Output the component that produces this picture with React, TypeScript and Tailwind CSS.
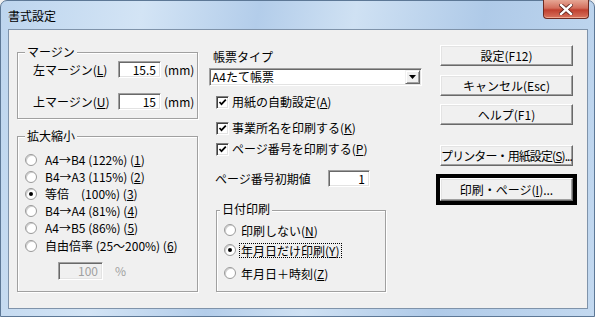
import React from "react";

const F = "font-['Noto_Sans_CJK_JP','Noto_Sans',sans-serif]";

const U = ({ c }: { c: string }) => (
  <span className="underline underline-offset-[1px] decoration-[1px]">{c}</span>
);

function Radio({ checked }: { checked?: boolean }) {
  return (
    <span className="w-[12px] h-[12px] rounded-full border border-[#9a9a9a] bg-white flex items-center justify-center shrink-0 shadow-[inset_1px_1px_0_#cfcfcf]">
      {checked && <span className="w-[4px] h-[4px] rounded-full bg-black" />}
    </span>
  );
}

function Check() {
  return (
    <span className="w-[13px] h-[13px] border border-t-[#808080] border-l-[#808080] border-b-[#ffffff] border-r-[#ffffff] bg-white shadow-[inset_1px_1px_0_#404040,inset_-1px_-1px_0_#e3e3e3] flex items-center justify-center shrink-0">
      <svg width="9" height="9" viewBox="0 0 9 9">
        <path d="M1.5 4 L3.5 6.2 L7.8 1.6" stroke="#000" strokeWidth="1.7" fill="none" />
      </svg>
    </span>
  );
}

function Edit({ v, w, h, disabled }: { v: string; w: string; h: string; disabled?: boolean }) {
  return (
    <span
      className={`${w} ${h} border border-t-[#a0a0a0] border-l-[#a0a0a0] border-b-[#ffffff] border-r-[#ffffff] shadow-[inset_1px_1px_0_#696969,inset_-1px_-1px_0_#e3e3e3] flex items-center justify-end pr-[4px] shrink-0 ${
        disabled ? "bg-[#f0f0f0] text-[#a0a0a0]" : "bg-white text-black"
      }`}
    >
      {v}
    </span>
  );
}

function Btn({ children, h = "h-[21px]", extra = "" }: { children: React.ReactNode; h?: string; extra?: string }) {
  return (
    <div
      className={`w-[133px] ${h} bg-[#f0f0f0] border border-t-[#ffffff] border-l-[#ffffff] border-b-[#696969] border-r-[#696969] shadow-[inset_-1px_-1px_0_#a0a0a0,inset_1px_1px_0_#e3e3e3] flex items-center justify-center whitespace-nowrap overflow-hidden text-[12px] leading-[12px] ${extra}`}
    >
      {children}
    </div>
  );
}

export default function App() {
  return (
    <div className={`${F} w-[595px] h-[317px] relative overflow-hidden text-black text-[12px] leading-[12px] bg-[#f0f0f0]`}>
      <div className="w-[595px] h-[317px] rounded-t-[7px] border border-[#5d7896] bg-[linear-gradient(100deg,#bdd5ee_0%,#d3e4f5_22%,#b3cdea_40%,#cfe1f3_55%,#afcae8_75%,#c3d9f0_100%)] flex flex-col">
        {/* title bar */}
        <div className="h-[28px] flex items-start pl-[7px] pt-[8px] shrink-0">
          <span className="text-[12px] leading-[14px] text-black">書式設定</span>
        </div>
        <div className="absolute top-0 right-[6px] w-[46px] h-[19px] rounded-b-[4px] border border-t-0 border-[#6e2b22] bg-[linear-gradient(180deg,#e6a795_0%,#d36e5c_45%,#c0402f_55%,#d8735e_100%)] flex items-center justify-center shadow-[inset_0_-1px_0_#f0a890]">
          <svg width="14" height="11" viewBox="0 0 14 11">
            <path d="M2 1 L12 10 M12 1 L2 10" stroke="#5a2018" strokeWidth="4" strokeLinecap="square" />
            <path d="M2 1 L12 10 M12 1 L2 10" stroke="#ffffff" strokeWidth="2.4" strokeLinecap="square" />
          </svg>
        </div>

        {/* client area */}
        <div className="ml-[7px] w-[580px] h-[280px] border border-[#7f93aa] bg-[#f0f0f0] flex items-start shrink-0">
          {/* left column */}
          <div className="ml-[8px] w-[181px] pt-[22px] flex flex-col shrink-0">
            <div className="relative h-[67px] border border-[#a0a0a0] shadow-[inset_1px_1px_0_#fff,1px_1px_0_#fff] pt-[8px] pl-[15px] flex flex-col">
              <span className="absolute -top-[7px] left-[7px] px-[2px] bg-[#f0f0f0] leading-[12px]">マージン</span>
              <div className="h-[17px] flex items-center">
                <span className="w-[85px]">左マージン(<U c="L" />)</span>
                <Edit v="15.5" w="w-[43px]" h="h-[17px]" />
                <span className="ml-[3px]">(mm)</span>
              </div>
              <div className="h-[17px] mt-[15px] flex items-center">
                <span className="w-[85px]">上マージン(<U c="U" />)</span>
                <Edit v="15" w="w-[43px]" h="h-[17px]" />
                <span className="ml-[3px]">(mm)</span>
              </div>
            </div>

            <div className="relative mt-[17px] border border-[#a0a0a0] shadow-[inset_1px_1px_0_#fff,1px_1px_0_#fff] pt-[14px] pb-[11px] pl-[7px] flex flex-col">
              <span className="absolute -top-[7px] left-[7px] px-[2px] bg-[#f0f0f0] leading-[12px]">拡大縮小</span>
              {[
                ["A4→B4 (122%) (", "1"],
                ["B4→A3 (115%) (", "2"],
                ["等倍　(100%) (", "3"],
                ["B4→A4 (81%) (", "4"],
                ["A4→B5 (86%) (", "5"],
              ].map(([t, n], i) => (
                <div key={i} className="h-[17px] flex items-center gap-[8px]">
                  <Radio checked={i === 2} />
                  <span>
                    {t}
                    <U c={n} />)
                  </span>
                </div>
              ))}
              <div className="h-[17px] mt-[1px] flex items-center gap-[8px]">
                <Radio />
                <span>
                  自由倍率 (25～200%) (<U c="6" />)
                </span>
              </div>
              <div className="mt-[8px] ml-[33px] flex items-center">
                <Edit v="100" w="w-[45px]" h="h-[18px]" disabled />
                <span className="ml-[12px] text-[#a0a0a0]">%</span>
              </div>
            </div>
          </div>

          {/* middle column */}
          <div className="ml-[11px] w-[213px] pt-[21px] flex flex-col shrink-0">
            <span className="ml-[4px] h-[12px]">帳票タイプ</span>
            <div className="mt-[5px] h-[18px] w-[213px] border border-t-[#a0a0a0] border-l-[#a0a0a0] border-b-[#ffffff] border-r-[#ffffff] shadow-[inset_1px_1px_0_#696969,inset_-1px_-1px_0_#e3e3e3] bg-white flex items-center justify-between pl-[2px] pr-[1px]">
              <span>A4たて帳票</span>
              <span className="w-[15px] h-[14px] bg-[#f0f0f0] border border-t-[#f0f0f0] border-l-[#f0f0f0] border-b-[#696969] border-r-[#696969] shadow-[inset_1px_1px_0_#fff,inset_-1px_-1px_0_#a0a0a0] flex items-center justify-center">
                <svg width="7" height="4" viewBox="0 0 7 4">
                  <path d="M0 0 H7 L3.5 4 Z" fill="#000" />
                </svg>
              </span>
            </div>
            <div className="mt-[8px] h-[16px] ml-[7px] flex items-center gap-[3px]">
              <Check />
              <span>用紙の自動設定(<U c="A" />)</span>
            </div>
            <div className="mt-[10px] h-[16px] ml-[7px] flex items-center gap-[3px]">
              <Check />
              <span>事業所名を印刷する(<U c="K" />)</span>
            </div>
            <div className="mt-[5px] h-[16px] ml-[7px] flex items-center gap-[3px]">
              <Check />
              <span>ページ番号を印刷する(<U c="P" />)</span>
            </div>
            <div className="mt-[13px] h-[17px] ml-[6px] flex items-center">
              <span className="w-[113px]">ページ番号初期値</span>
              <Edit v="1" w="w-[42px]" h="h-[17px]" />
            </div>
            <div className="relative mt-[23px] ml-[7px] w-[170px] border border-[#a0a0a0] shadow-[inset_1px_1px_0_#fff,1px_1px_0_#fff] pt-[11px] pb-[10px] pl-[7px] flex flex-col">
              <span className="absolute -top-[8px] left-[3px] px-[2px] bg-[#f0f0f0] leading-[12px]">日付印刷</span>
              <div className="h-[16px] flex items-center gap-[3px]">
                <Radio />
                <span className="border border-transparent px-[1px] leading-[13px]">印刷しない(<U c="N" />)</span>
              </div>
              <div className="mt-[4px] h-[16px] flex items-center gap-[3px]">
                <Radio checked />
                <span className="border border-dotted border-black px-[1px] leading-[13px]">年月日だけ印刷(<U c="Y" />)</span>
              </div>
              <div className="mt-[7px] h-[16px] flex items-center gap-[3px]">
                <Radio />
                <span className="border border-transparent px-[1px] leading-[13px]">年月日＋時刻(<U c="Z" />)</span>
              </div>
            </div>
          </div>

          {/* right column */}
          <div className="ml-[18px] w-[133px] pt-[15px] flex flex-col shrink-0">
            <Btn>設定(F12)</Btn>
            <div className="mt-[9px]">
              <Btn>キャンセル(Esc)</Btn>
            </div>
            <div className="mt-[8px]">
              <Btn>ヘルプ(F1)</Btn>
            </div>
            <div className="mt-[20px]">
              <Btn extra="text-[11px] tracking-[-0.9px]">
                プリンター・用紙設定(<U c="S" />)...
              </Btn>
            </div>
            <div className="mt-[8px] -ml-[4px] w-[141px] h-[31px] border-[4px] border-black">
              <Btn h="h-[23px]">
                印刷・ページ(<U c="I" />)...
              </Btn>
            </div>
          </div>
        </div>
      </div>
    </div>
  );
}
